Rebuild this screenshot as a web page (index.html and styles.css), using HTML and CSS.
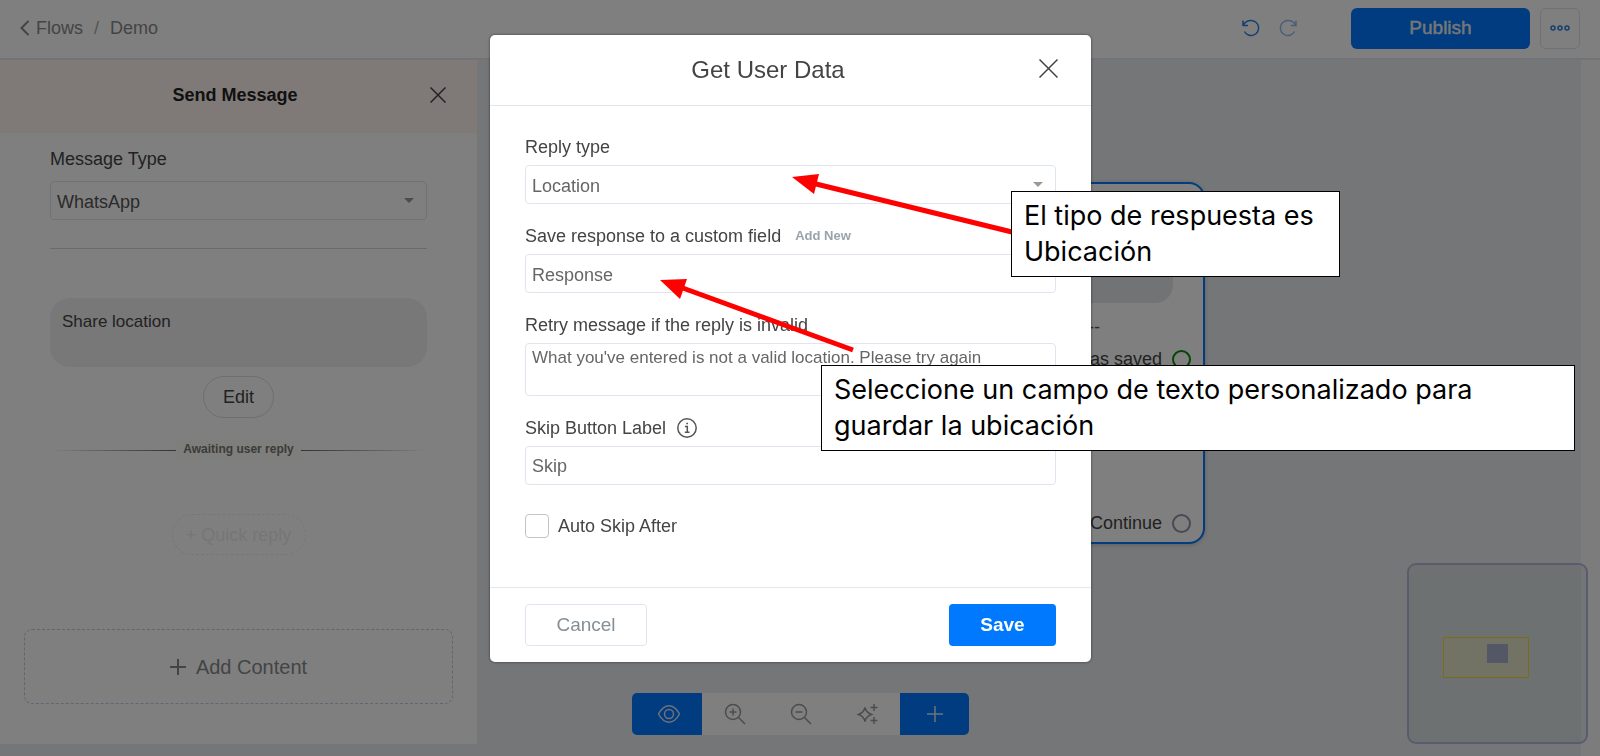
FILE: index.html
```html
<!DOCTYPE html>
<html lang="en">
<head>
<meta charset="utf-8">
<title>Flows / Demo</title>
<link rel="stylesheet" href="styles.css">
</head>
<body>
<div class="app">
  <header class="topbar">
    <nav class="crumbs" aria-label="Breadcrumb">
      <svg class="back" width="10" height="16" viewBox="0 0 10 16"><path d="M8.500 1 1.500 8l7 7"/></svg>
      <a href="#flows">Flows</a><span class="slash">/</span><a href="#demo">Demo</a>
    </nav>
    <div class="top-actions">
      <button class="icon-btn" aria-label="Undo"><svg width="18" height="18" viewBox="0 0 18 18"><path d="M1 1.500v5H6M1.500 6C3 3 6 1.500 9 1.500a7.500 7.500 0 1 1-6.500 11"/></svg></button>
      <button class="icon-btn faded" aria-label="Redo"><svg width="18" height="18" viewBox="0 0 18 18"><path d="M17 1.500v5H12M16.500 6C15 3 12 1.500 9 1.500a7.500 7.500 0 1 0 6.500 11"/></svg></button>
      <button class="publish">Publish</button>
      <button class="more" aria-label="More"><svg width="20" height="6" viewBox="0 0 20 6"><circle cx="3" cy="3" r="2"/><circle cx="10" cy="3" r="2"/><circle cx="17" cy="3" r="2"/></svg></button>
    </div>
  </header>

  <main class="workspace">
    <aside class="panel">
      <div class="panel-head">
        <h2>Send Message</h2>
        <button class="close-btn" aria-label="Close panel"><svg width="16" height="16" viewBox="0 0 16 16"><path d="M.5.5l15 15M15.500.5l-15 15"/></svg></button>
      </div>
      <div class="panel-body">
        <label class="label" for="msg-type">Message Type</label>
        <div class="select-wrap">
          <select id="msg-type" class="field"><option>WhatsApp</option></select>
          <svg class="caret" width="10" height="5" viewBox="0 0 10 5"><path d="M0 0h10L5 5z"/></svg>
        </div>
        <hr class="rule">
        <div class="bubble">Share location</div>
        <button class="edit">Edit</button>
        <div class="awaiting"><span>Awaiting user reply</span></div>
        <button class="quick">+ Quick reply</button>
      </div>
      <button class="add-content"><svg width="16" height="16" viewBox="0 0 16 16"><path d="M8 0v16M0 8h16"/></svg>Add Content</button>
    </aside>

    <section class="canvas">
      <article class="node">
        <div class="node-bubble"></div>
        <div class="node-dash">-----------</div>
        <div class="node-port">Response was saved<i class="port ok"></i></div>
        <div class="node-port last">Continue<i class="port"></i></div>
      </article>
      <div class="minimap"><div class="mini-view"><div class="mini-node"></div></div></div>
    </section>
  </main>

  <div class="toolbar">
    <button class="tool primary wide" aria-label="Preview"><svg width="24" height="20" viewBox="0 0 24 20"><path d="M1.500 10Q6 1.800 12 1.800T22.500 10Q18 18.200 12 18.200T1.500 10z"/><circle cx="12" cy="10" r="4.500"/></svg></button>
    <button class="tool" aria-label="Zoom in"><svg width="22" height="22" viewBox="0 0 22 22"><circle cx="9" cy="9" r="7.500"/><path d="M14.500 14.500 21 21M9 5.500v7M5.500 9h7"/></svg></button>
    <button class="tool" aria-label="Zoom out"><svg width="22" height="22" viewBox="0 0 22 22"><circle cx="9" cy="9" r="7.500"/><path d="M14.500 14.500 21 21M5.500 9h7"/></svg></button>
    <button class="tool" aria-label="Arrange"><svg width="22" height="22" viewBox="0 0 22 22"><path d="M9 4.500Q10 9.500 15.500 11.500 10 13.500 9 18.500 8 13.500 2.500 11.500 8 9.500 9 4.500zM18 1v7M14.500 4.500h7M18 14v7M14.500 17.500h7"/></svg></button>
    <button class="tool primary" aria-label="Add"><svg width="18" height="18" viewBox="0 0 18 18"><path d="M9 1v16M1 9h16"/></svg></button>
  </div>
</div>

<div class="backdrop">
  <form class="modal" role="dialog" aria-labelledby="dlg-title">
    <div class="modal-head">
      <h1 id="dlg-title">Get User Data</h1>
      <button type="button" class="close-btn" aria-label="Close dialog"><svg width="19" height="19" viewBox="0 0 19 19"><path d="M.5.5l18 18M18.500.5l-18 18"/></svg></button>
    </div>
    <div class="modal-body">
      <div class="group">
        <label class="label" for="reply-type">Reply type</label>
        <div class="select-wrap">
          <select id="reply-type" class="field"><option>Location</option></select>
          <svg class="caret" width="10" height="5" viewBox="0 0 10 5"><path d="M0 0h10L5 5z"/></svg>
        </div>
      </div>
      <div class="group">
        <div class="label-row"><label class="label" for="custom-field">Save response to a custom field</label><a class="add-new" href="#new">Add New</a></div>
        <select id="custom-field" class="field"><option>Response</option></select>
      </div>
      <div class="group">
        <label class="label" for="retry">Retry message if the reply is invalid</label>
        <textarea id="retry" class="field area">What you've entered is not a valid location. Please try again</textarea>
      </div>
      <div class="group">
        <div class="label-row"><label class="label" for="skip">Skip Button Label</label><svg class="info" width="20" height="20" viewBox="0 0 20 20"><circle cx="10" cy="10" r="9.200"/><path d="M8 8.500h2.300v5.500M7.800 14.300h4.700M9.300 5.500h1.700"/></svg></div>
        <input id="skip" class="field" type="text" value="Skip">
      </div>
      <label class="check"><input type="checkbox">Auto Skip After</label>
    </div>
    <div class="modal-foot">
      <button type="button" class="cancel">Cancel</button>
      <button type="button" class="save">Save</button>
    </div>
  </form>
</div>

<div class="notes">
  <svg class="arrows" width="1600" height="756" viewBox="0 0 1600 756">
    <path class="shaft" d="M1012 232 812 183M853 350 680 287"/>
    <path class="head" d="M792 177l27-3-5 20zM660 280l27-1-7 20z"/>
  </svg>
  <p class="note note-type">El tipo de respuesta es<br>Ubicación</p>
  <p class="note note-field">Seleccione un campo de texto personalizado para<br>guardar la ubicación</p>
</div>
</body>
</html>
```
FILE: styles.css
```css
* { box-sizing: border-box; }
body {
  margin: 0;
  font-family: "Liberation Sans", Arial, sans-serif;
  font-size: 18px;
  line-height: 24px;
  color: #444;
  overflow: hidden;
}
button, input, select, textarea { font: inherit; color: inherit; margin: 0; }
button { background: none; border: 0; padding: 0; }
a { color: inherit; text-decoration: none; }
h1, h2, p { margin: 0; }
svg { display: block; fill: none; stroke: currentColor; }

.app { display: flex; flex-direction: column; height: 100vh; position: relative; background: #fff; }
.topbar {
  display: flex; justify-content: space-between; align-items: center;
  height: 60px; padding: 0 20px 2px; border-bottom: 2px solid #e3e6ec;
}
.crumbs { display: flex; align-items: center; color: #888; }
.back { margin-right: 6px; stroke-width: 2; }
.slash { margin: 0 11px; color: #aaa; }
.top-actions { display: flex; align-items: center; color: #2a7fdc; }
.icon-btn { margin-right: 19px; stroke-width: 1.500; }
.icon-btn.faded { opacity: .5; margin-right: 54px; }
.publish { width: 179px; height: 41px; border-radius: 6px; background: #0079ff; color: #eee; font-size: 19px; margin-right: 10px; -webkit-text-stroke: thin #eee; }
.more { width: 40px; height: 41px; border: 1px solid #dfe3e8; border-radius: 6px; display: grid; place-items: center; stroke-width: 1.500; }

.workspace { flex: 1; display: flex; min-height: 0; background: #eaecee; }
.panel { width: 477px; margin-bottom: 12px; background: #fff; display: flex; flex-direction: column; }
.panel-head { height: 73px; background: #fff5ef; display: flex; align-items: center; padding: 0 31px 3px 24px; }
.panel-head h2 { flex: 1; font-size: 18px; text-align: center; color: #222; padding-left: 16px; }
.close-btn { stroke-width: 1.500; }
.panel-body { padding: 14px 50px 0; display: flex; flex-direction: column; }
.label { display: block; color: #444; }
.panel .label { margin-bottom: 10px; }
.select-wrap { position: relative; }
.field {
  display: block; width: 100%; height: 39px; padding: 2px 6px 0; border: 1px solid #dfe5ee;
  border-radius: 4px; background: #fff; appearance: none; color: #666; resize: none; outline: none;
}
.panel .field { color: #555; }
.caret { position: absolute; right: 13px; top: 17px; fill: #999; stroke: none; }
.rule { width: 100%; margin: 28px 0 49px; border: 0; border-top: 1px solid #d5d5d5; }
.bubble { height: 69px; border-radius: 20px; background: #f0f0f0; padding: 12px; font-size: 17px; }
.edit { align-self: center; margin-top: 9px; width: 71px; height: 42px; border: 1px solid #dcdcdc; border-radius: 21px; }
.awaiting { margin-top: 21px; display: flex; align-items: center; font-size: 12px; font-weight: bold; color: #777; line-height: 20px; }
.awaiting span { background: #fdfcf8; padding: 0 7px; }
.awaiting::before, .awaiting::after { content: ""; flex: 1; height: 1px; margin-top: 3px; background: linear-gradient(90deg, transparent, #666); }
.awaiting::after { background: linear-gradient(90deg, #666, transparent); }
.quick { align-self: center; margin-top: 55px; width: 134px; height: 41px; border: 1px dashed #ececec; border-radius: 21px; color: #ececec; }
.add-content {
  margin: auto 24px 40px; height: 75px; border: 1px dashed #b9cfe4; border-radius: 8px; color: #888;
  font-size: 20px; display: flex; align-items: center; justify-content: center; gap: 10px; stroke-width: 2;
}

.canvas { flex: 1; position: relative; border-right: 19px solid #f8f8f8; }
.node {
  position: absolute; left: 398px; top: 122px; width: 330px; height: 362px;
  border: 2px solid #0079ff; border-radius: 16px; background: #fff; padding: 44px 30px 0; box-shadow: 0 1px 4px #0003;
}
.node-bubble { height: 75px; border-radius: 18px; background: #e5e6ea; }
.node-dash { text-align: right; margin: 12px 73px 8px 0; color: #555; }
.node-port { display: flex; justify-content: flex-end; align-items: center; gap: 10px; margin-right: -18px; }
.node-port.last { margin-top: 140px; }
.port { width: 19px; height: 19px; border: 2px solid #8e95a8; border-radius: 50%; }
.port.ok { border-color: #0b8a0b; }
.minimap { position: absolute; right: -7px; bottom: 12px; width: 181px; height: 181px; border: 2px solid #b4b7dc; border-radius: 9px; background: #a8bcc033; padding: 72px 0 0 34px; }
.mini-view { width: 86px; height: 41px; border: 1px solid #f0dc30; background: #fff08040; padding: 6px 0 0 43px; }
.mini-node { width: 21px; height: 19px; background: #a9afcc; }

.toolbar { position: absolute; left: 632px; bottom: 21px; height: 42px; display: flex; border-radius: 5px; overflow: hidden; background: #fff; color: #999; }
.tool { width: 66px; display: grid; place-items: center; stroke-width: 1.500; }
.tool.primary { background: #0079ff; color: #d8e6f5; width: 69px; }
.tool.wide { width: 70px; padding-left: 3px; }

.backdrop { position: fixed; inset: 0; background: #00000080; display: flex; justify-content: center; align-items: flex-start; padding: 35px 19px 0 0; }
.modal { width: 601px; background: #fff; border-radius: 5px; box-shadow: 0 0 3px #0008; }
.modal-head { display: flex; align-items: center; height: 71px; padding: 0 33px; border-bottom: 1px solid #dfe5ea; }
.modal-head h1 { flex: 1; font-size: 24px; font-weight: normal; text-align: center; line-height: 30px; padding-right: 26px; }
.modal-head .close-btn { padding-bottom: 3px; }
.modal-body { padding: 29px 35px 49px; }
.group { margin-bottom: 20px; }
.group .label { margin-bottom: 6px; }
.label-row { display: flex; }
.add-new { margin-left: 14px; font-size: 13px; font-weight: bold; color: #9aa3aa; }
.area { height: 53px; padding: 2px 6px; font-size: 17px; overflow: hidden; }
.info { margin: 2px 0 0 11px; stroke-width: 1.500; color: #555; }
.check { display: flex; align-items: center; margin-top: 29px; }
.check input { appearance: none; width: 24px; height: 24px; border: 1px solid #c4c4c4; border-radius: 4px; margin-right: 9px; background: #fff; }
.modal-foot { display: flex; justify-content: space-between; padding: 16px 35px; border-top: 1px solid #e3e7ee; }
.cancel { width: 122px; height: 42px; border: 1px solid #dfe5ee; border-radius: 4px; color: #868e96; font-size: 19px; }
.save { width: 107px; height: 42px; border-radius: 4px; background: #0079ff; color: #fff; font-size: 19px; font-weight: bold; }

.notes { position: fixed; inset: 0; pointer-events: none; }
.arrows { position: absolute; left: 0; top: 0; }
.shaft { stroke: #f00; stroke-width: 5; }
.head { fill: #f00; stroke: none; }
.note { position: absolute; padding: 6px 12px; border: 1px solid #000; background: #fff; color: #000; font-family: Inter, sans-serif; font-size: 27px; line-height: 36px; white-space: nowrap; }
.note-type { left: 1011px; top: 191px; width: 329px; }
.note-field { left: 821px; top: 365px; width: 754px; }
```
